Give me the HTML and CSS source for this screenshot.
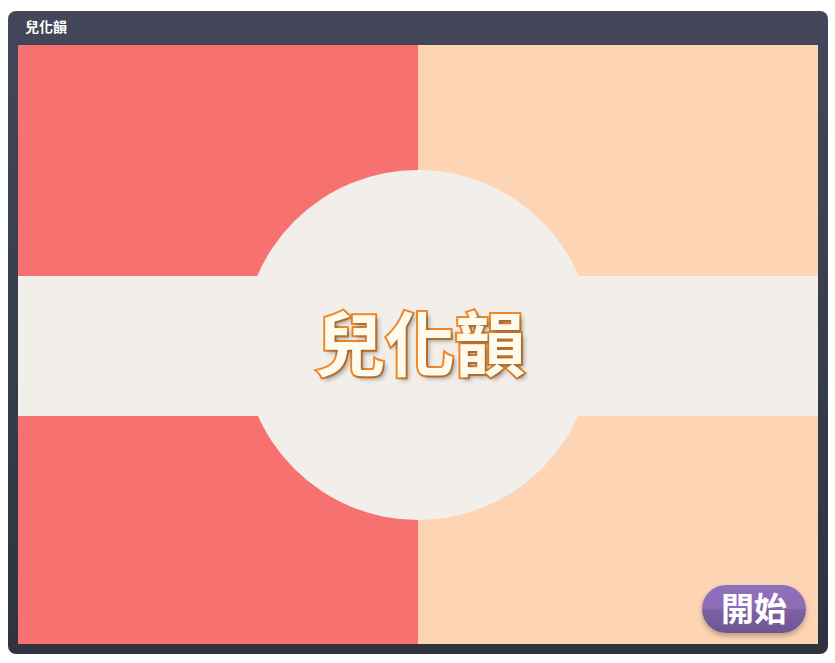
FILE: index.html
```html
<!DOCTYPE html>
<html lang="zh-Hant">
<head>
  <meta charset="UTF-8">
  <title>兒化韻</title>
  <link rel="stylesheet" href="styles.css">
</head>
<body>
  <div class="window">
    <div class="title-bar">兒化韻</div>
    <div class="stage">
      <div class="panel panel-red"></div>
      <div class="panel panel-peach"></div>
      <div class="band"></div>
      <div class="circle"></div>
      <div class="logo">兒化韻</div>
      <button class="start-button">開始</button>
    </div>
  </div>
</body>
</html>
```

FILE: styles.css
```css
:root {
  --cream: #F2EEE9;
  --red: #F87171;
  --peach: #FDD5B5;
  --orange: #F08A2C;
}

html, body {
  height: 100%;
}

body {
  margin: 0;
  background-color: #FFFFFF;
  font-family: "Noto Sans CJK TC", "Liberation Sans", sans-serif;
}

.window {
  width: 820px;
  height: 643px;
  margin: 11px 0 0 8px;
  border-radius: 8px;
  background: linear-gradient(to bottom, #434759, #2E333F);
  display: flex;
  flex-direction: column;
  box-sizing: border-box;
  padding: 0 10px 10px;
}

.title-bar {
  height: 34px;
  padding-left: 7px;
  color: #FFFFFF;
  font-size: 14px;
  font-weight: bold;
  line-height: 31px;
}

.stage {
  flex: 1;
  position: relative;
  overflow: hidden;
  display: grid;
  grid-template-columns: 1fr 1fr;
}

.panel-red {
  background-color: var(--red);
}

.panel-peach {
  background-color: var(--peach);
}

.band {
  position: absolute;
  left: 0;
  right: 0;
  top: 231px;
  height: 140px;
  background-color: var(--cream);
}

.circle {
  position: absolute;
  left: 225px;
  top: 125px;
  width: 350px;
  height: 350px;
  border-radius: 50%;
  background-color: var(--cream);
}

.logo {
  position: absolute;
  left: 4px;
  right: 0;
  top: 248px;
  text-align: center;
  color: #FFFBEC;
  font-size: 70px;
  font-weight: bold;
  line-height: 96px;
  -webkit-text-stroke: 4px var(--orange);
  paint-order: stroke fill;
  text-shadow: 3px 3px 4px rgba(70, 60, 50, 0.45);
}

.start-button {
  position: absolute;
  right: 12px;
  bottom: 11px;
  width: 104px;
  height: 48px;
  padding: 0 0 3px;
  border: none;
  border-radius: 24px;
  background: linear-gradient(to bottom, #8F70BC 0, #8B6DB6 50%, #7D62A6 50%, #6D5593 100%);
  box-shadow: 0 3px 5px rgba(90, 70, 50, 0.4);
  color: #FFFFFF;
  font-family: inherit;
  font-size: 33px;
  font-weight: bold;
  line-height: 45px;
  cursor: pointer;
}
```
